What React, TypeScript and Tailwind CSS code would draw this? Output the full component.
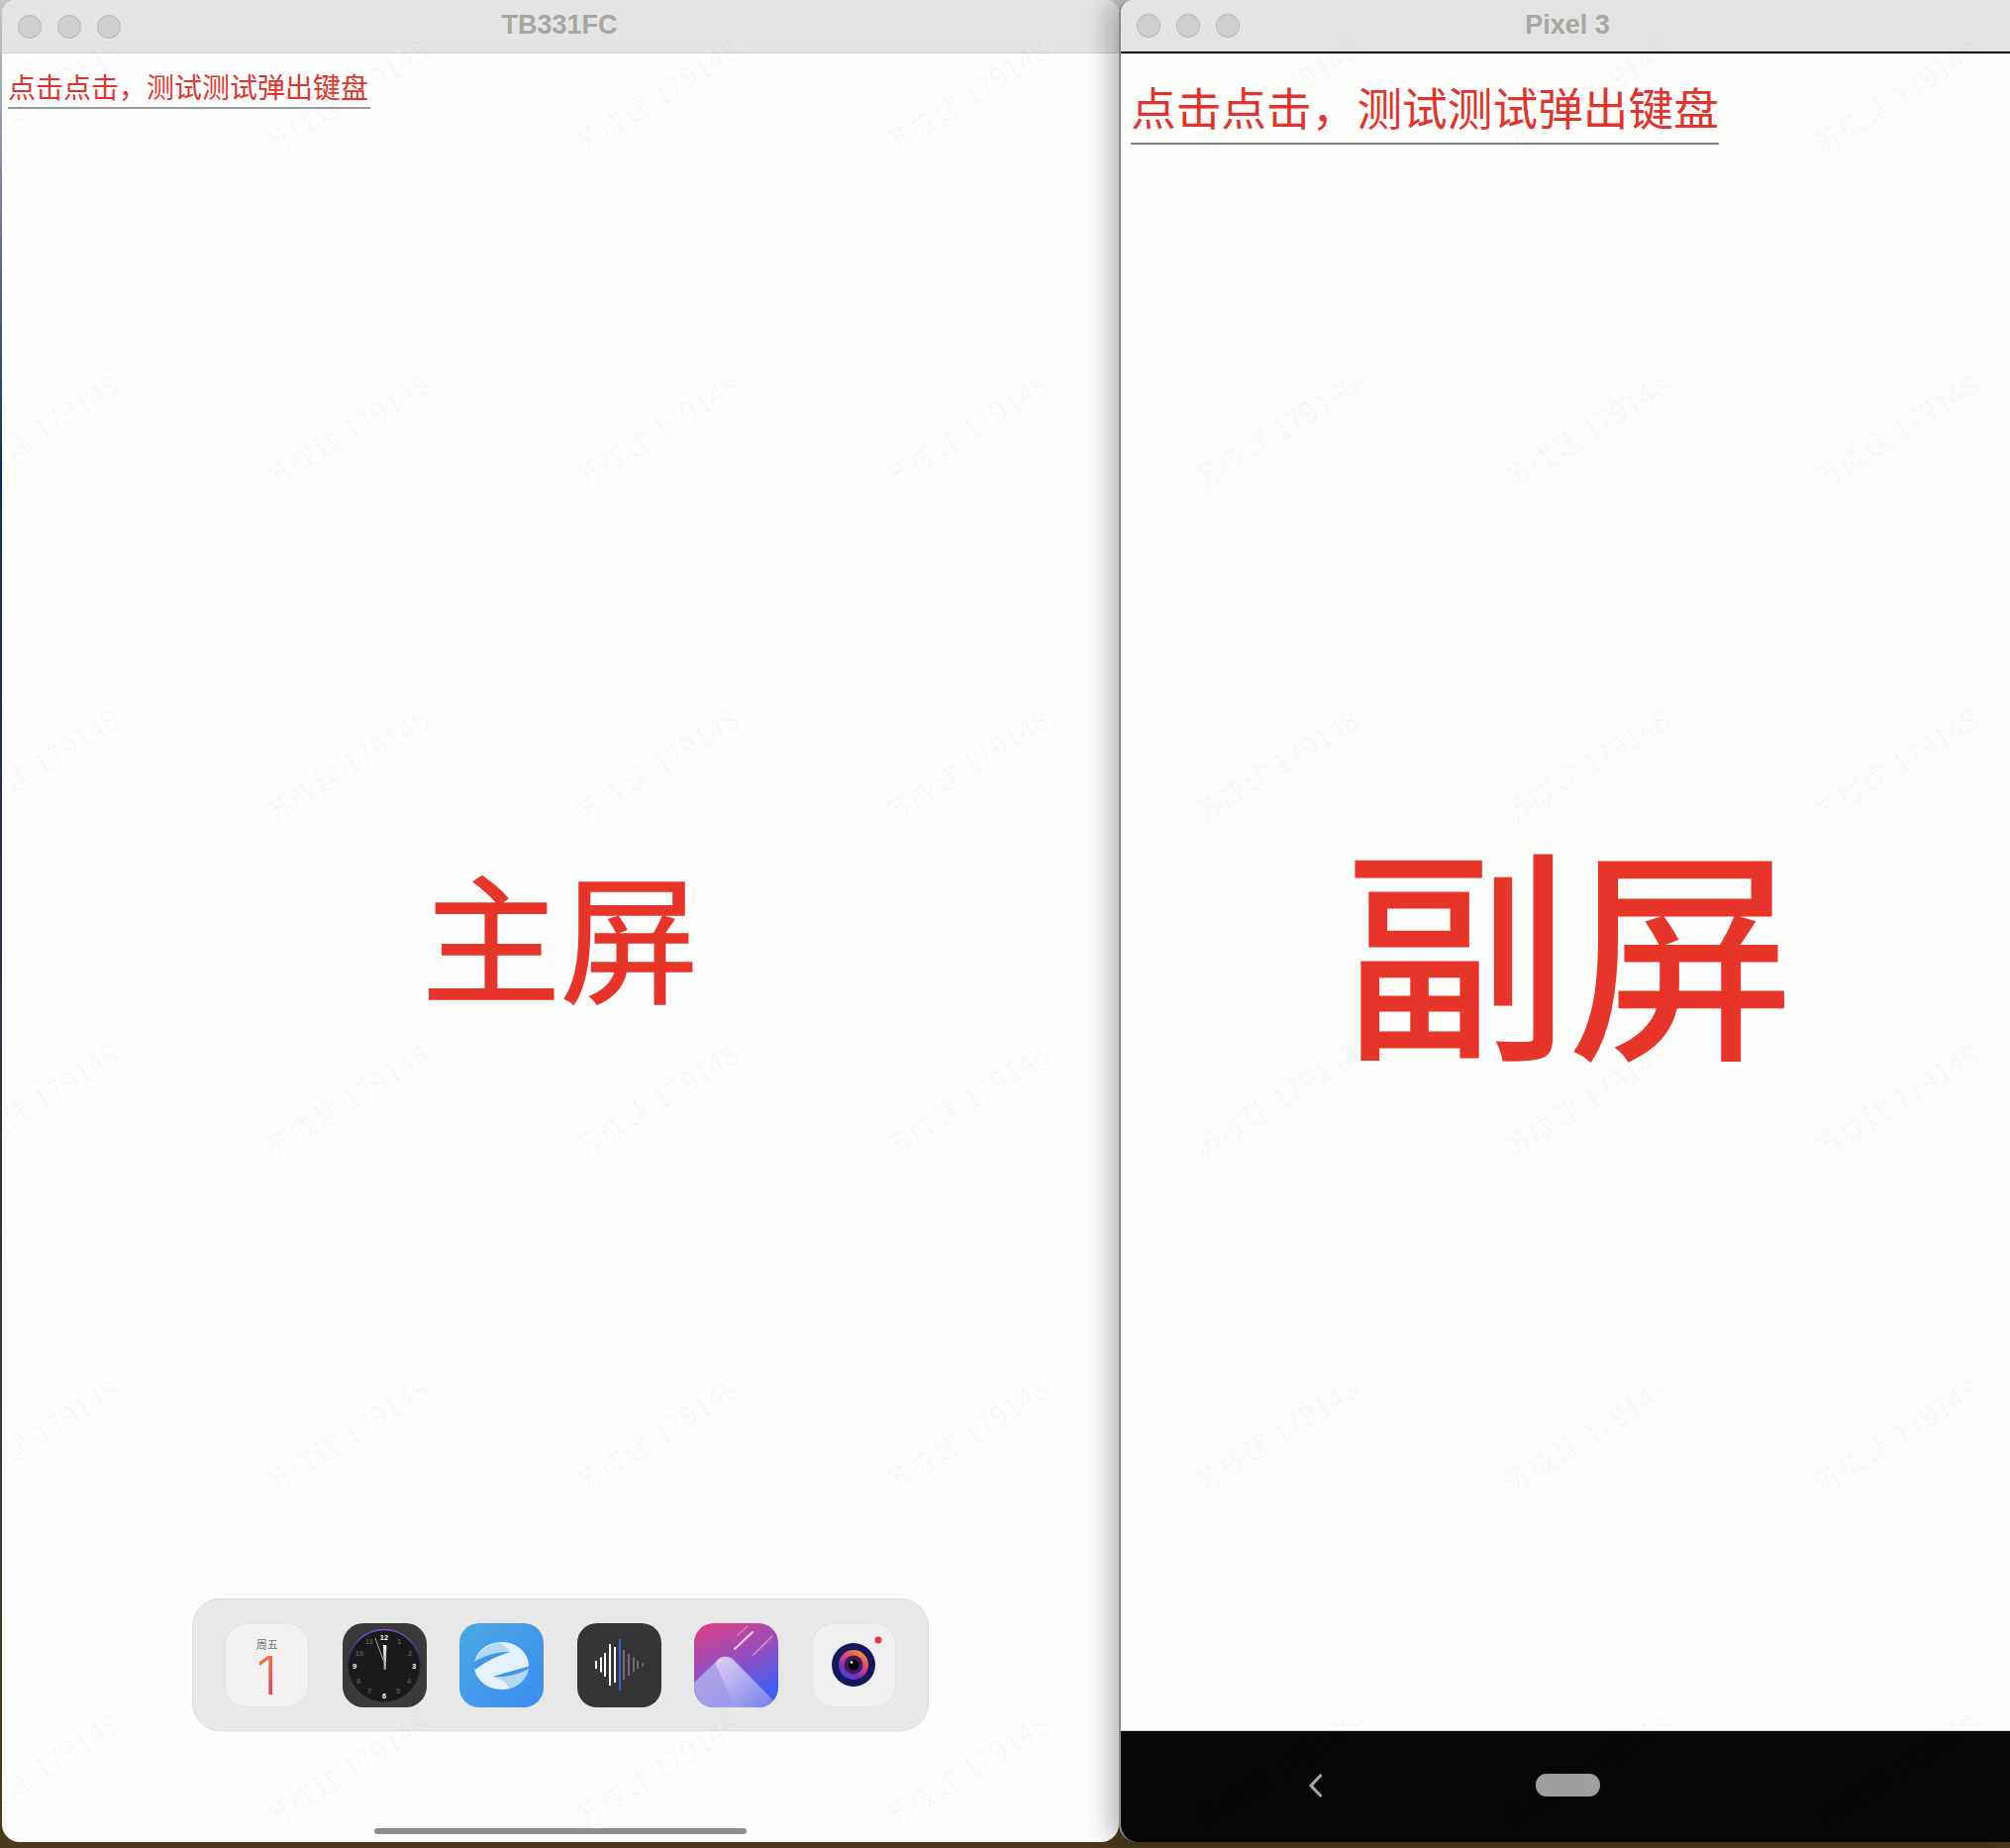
const cjk = "font-['Noto_Sans_CJK_SC','Noto_Sans',sans-serif]";

function Lights() {
  return (
    <div className="flex gap-4">
      <span className="w-6 h-6 rounded-full bg-[#d0d0ce] border border-[#b4b4b2]"></span>
      <span className="w-6 h-6 rounded-full bg-[#d0d0ce] border border-[#b4b4b2]"></span>
      <span className="w-6 h-6 rounded-full bg-[#d0d0ce] border border-[#b4b4b2]"></span>
    </div>
  );
}

function TitleBar({ title, dark }: { title: string; dark?: boolean }) {
  return (
    <div
      className={
        dark
          ? "relative h-[54px] shrink-0 flex items-center pl-4 bg-[#e3e3e1] border-b-2 border-black"
          : "relative h-[54px] shrink-0 flex items-center pl-4 bg-[#e4e4e2] border-b border-[#d2d2d0]"
      }
    >
      <Lights />
      <div
        className={
          dark
            ? "flex-1 text-center text-[#a6a6a4] font-bold text-[27px] leading-[30px] pb-[3px] font-['Liberation_Sans',sans-serif] pr-[116px]"
            : "flex-1 text-center text-[#a6a6a4] font-bold text-[27px] leading-[30px] pb-[3px] font-['Liberation_Sans',sans-serif] pr-[122px]"
        }
      >
        {title}
      </div>
    </div>
  );
}

function CalendarIcon() {
  return (
    <div className="w-[85px] h-[85px] rounded-[22px] bg-[#f1f1f1] border border-[#e2e2e2] flex flex-col items-center">
      <span className={`${cjk} text-[11px] leading-[12px] mt-[14px] text-[#777]`}>周五</span>
      <span className="font-['Inter',sans-serif] font-light text-[54px] leading-[48px] mt-[2px] text-transparent bg-clip-text bg-gradient-to-b from-[#f0762a] to-[#e6306e]">
        1
      </span>
    </div>
  );
}

function ClockIcon() {
  const nums = [
    ["12", 42, 17, "#fff"],
    ["1", 57, 21, "#555"],
    ["2", 68, 33, "#555"],
    ["3", 72, 46, "#fff"],
    ["4", 67, 61, "#555"],
    ["5", 56, 71, "#555"],
    ["6", 42, 76, "#fff"],
    ["7", 27, 71, "#555"],
    ["8", 16, 61, "#555"],
    ["9", 12, 46, "#fff"],
    ["10", 17, 33, "#555"],
    ["11", 27, 21, "#555"],
  ] as const;
  return (
    <svg width="85" height="85" viewBox="0 0 85 85">
      <defs>
        <linearGradient id="clockArc" x1="0" y1="0" x2="0" y2="1">
          <stop offset="0" stopColor="#7b4fd6" />
          <stop offset="1" stopColor="#22223a" />
        </linearGradient>
        <linearGradient id="clockHand" x1="0" y1="0" x2="0" y2="1">
          <stop offset="0" stopColor="#fff" />
          <stop offset="1" stopColor="#999" />
        </linearGradient>
      </defs>
      <rect width="85" height="85" rx="21" fill="#3a3a3a" />
      <circle cx="42" cy="43" r="36.5" fill="#1a1a1c" />
      <path d="M5.5 43a36.5 36.5 0 0 1 73 0" fill="none" stroke="url(#clockArc)" strokeWidth="1.4" />
      {nums.map((n) => (
        <text
          key={n[0]}
          x={n[1]}
          y={n[2]}
          fill={n[3]}
          fontSize="7.5"
          fontWeight="700"
          textAnchor="middle"
          fontFamily="Liberation Sans"
        >
          {n[0]}
        </text>
      ))}
      <path d="M41 22h3.400l-.6 25h-2.200z" fill="url(#clockHand)" />
      <path d="M33 15l8 22" stroke="#a8a8a8" strokeWidth="1" />
    </svg>
  );
}

function BrowserIcon() {
  return (
    <svg width="85" height="85" viewBox="0 0 85 85">
      <defs>
        <linearGradient id="browserBg" x1="0" y1="0" x2="1" y2="1">
          <stop offset="0" stopColor="#4aa8e2" />
          <stop offset="1" stopColor="#3a8cf0" />
        </linearGradient>
      </defs>
      <rect width="85" height="85" rx="20" fill="url(#browserBg)" />
      <ellipse cx="42.500" cy="43" rx="27.500" ry="24" fill="#e3f2fe" />
      <path d="M15 39C20 27 30 21 40 20c5 2 8 5 11 8-14 0-26 5-36 11z" fill="#b4d9f7" />
      <path d="M13 40c11-7 25-12 38-11-12 4-24 9-35 18z" fill="#4298e6" />
      <path d="M72 43c-14 4-26 7-38 11 12 2 26 0 38-7z" fill="#4298e6" />
      <path d="M70 46c-10 6-24 9-36 8 8 2 14 6 16 12 10-3 18-10 20-20z" fill="#b4d9f7" />
    </svg>
  );
}

function VoiceIcon() {
  const bars = [
    [19, 8, "#fff"],
    [24, 15, "#fff"],
    [28, 24, "#fff"],
    [33, 42, "#fff"],
    [38, 36, "#fff"],
    [43, 52, "#3f5fe0"],
    [47, 30, "#6e6e6e"],
    [52, 22, "#6e6e6e"],
    [57, 15, "#6e6e6e"],
    [61, 8, "#6e6e6e"],
    [66, 3, "#6e6e6e"],
  ] as const;
  return (
    <svg width="85" height="85" viewBox="0 0 85 85">
      <rect width="85" height="85" rx="20" fill="#353535" />
      {bars.map((b) => (
        <rect key={b[0]} x={b[0] - 1} y={42 - b[1] / 2} width="2" height={b[1]} fill={b[2]} />
      ))}
    </svg>
  );
}

function GalleryIcon() {
  return (
    <svg width="85" height="85" viewBox="0 0 85 85">
      <defs>
        <linearGradient id="galleryBg" x1="0" y1="0" x2="0.4" y2="1">
          <stop offset="0" stopColor="#e23f7a" />
          <stop offset="0.5" stopColor="#9a4dbe" />
          <stop offset="1" stopColor="#3f5ff0" />
        </linearGradient>
        <linearGradient id="galleryBase" x1="0" y1="0" x2="1" y2="1">
          <stop offset="0" stopColor="#bba3e6" />
          <stop offset="1" stopColor="#8f96f0" />
        </linearGradient>
        <linearGradient id="galleryPeak" x1="0" y1="0" x2="1" y2="1">
          <stop offset="0" stopColor="#eddcf3" />
          <stop offset="1" stopColor="#6f78ee" />
        </linearGradient>
        <clipPath id="galleryClip">
          <rect width="85" height="85" rx="20" />
        </clipPath>
      </defs>
      <g clipPath="url(#galleryClip)">
        <rect width="85" height="85" fill="url(#galleryBg)" />
        <path d="M0 60L24 37c4-4 10-4 14 0L82 80v5H0z" fill="url(#galleryBase)" />
        <path d="M22 42c0-8 12-11 18-5L80 78l-5 7H42z" fill="url(#galleryPeak)" opacity="0.8" />
        <path d="M41 26L59 9" stroke="#f6d8e6" strokeWidth="2" strokeLinecap="round" />
        <path d="M60 32L79 13" stroke="#e890b8" strokeWidth="1.5" strokeLinecap="round" />
        <path d="M43 13L54 3" stroke="#e880a8" strokeWidth="1.2" strokeLinecap="round" />
      </g>
    </svg>
  );
}

function CameraIcon() {
  return (
    <svg width="85" height="85" viewBox="0 0 85 85">
      <defs>
        <linearGradient id="lens" x1="0.8" y1="0" x2="0.2" y2="1">
          <stop offset="0" stopColor="#f0a020" />
          <stop offset="0.4" stopColor="#e0407a" />
          <stop offset="0.75" stopColor="#7a30c0" />
          <stop offset="1" stopColor="#2a50e0" />
        </linearGradient>
      </defs>
      <rect x="0.5" y="0.5" width="84" height="84" rx="21" fill="#efefef" stroke="#e2e2e2" />
      <circle cx="42" cy="42" r="22" fill="#14175a" />
      <circle cx="42" cy="42" r="15" fill="url(#lens)" />
      <circle cx="42" cy="42" r="9.500" fill="#3a1d5a" />
      <circle cx="42" cy="42" r="5.500" fill="#050505" />
      <circle cx="40" cy="39.500" r="1.400" fill="#d8d8d8" />
      <circle cx="67" cy="17" r="3.600" fill="#e23a48" />
    </svg>
  );
}

function Dock() {
  return (
    <div className="w-[744px] h-[134px] mx-auto rounded-[28px] bg-[#e8e8e8] border border-[#dcdcdc] flex items-center justify-center gap-[33.5px]">
      <CalendarIcon />
      <ClockIcon />
      <BrowserIcon />
      <VoiceIcon />
      <GalleryIcon />
      <CameraIcon />
    </div>
  );
}

function Watermarks() {
  const cells = Array.from({ length: 48 });
  return (
    <div className="absolute left-[-120px] top-[-72px] grid grid-cols-[repeat(8,313px)] auto-rows-[338px] pointer-events-none z-20">
      {cells.map((_, i) => (
        <div key={i} className="flex items-center justify-center">
          <span className={`${cjk} text-[29px] whitespace-nowrap -rotate-[32deg] text-black/[0.028]`}>
            苏成建 179148
          </span>
        </div>
      ))}
    </div>
  );
}

export default function App() {
  return (
    <div className="relative w-[2030px] h-[1866px] overflow-hidden bg-gradient-to-b from-[#c8c8c8] via-[#1a2a55] via-25% to-[#4a3a1c]">
      <div className="flex items-start h-[1860px] pl-[2px]">
        {/* 主屏 */}
        <div className="w-[1128px] h-full flex flex-col bg-[#fefefe] rounded-t-[14px] rounded-b-[18px] overflow-hidden">
          <TitleBar title="TB331FC" />
          <div className="pl-[6px] pt-[15px]">
            <span className={`${cjk} inline-block text-[28px] leading-[36px] pb-[3px] pr-[2px] text-[#e2332d] border-b-2 border-[#999]`}>
              点击点击，测试测试弹出键盘
            </span>
          </div>
          <div className={`${cjk} flex-1 flex items-center justify-center pt-[158px] [-webkit-text-stroke:1.5px_#e8352a] text-[#e8352a] text-[140px] leading-none`}>
            主屏
          </div>
          <Dock />
          <div className="w-[376px] h-[6px] mx-auto mt-[98px] mb-2 bg-[#8e8e8e] rounded-full"></div>
        </div>
        {/* 副屏 */}
        <div className="relative z-10 flex-1 h-full flex flex-col bg-[#fdfefc] border-l-2 border-[#8a8a8a] rounded-tl-[14px] rounded-bl-[18px] overflow-hidden shadow-[-10px_0_26px_rgba(0,0,0,0.28)]">
          <TitleBar title="Pixel 3" dark />
          <div className="pl-[10px] pt-[22px]">
            <span className={`${cjk} inline-block text-[45.7px] leading-[62px] pb-[6px] text-[#e2332d] border-b-2 border-[#808080]`}>
              点击点击，测试测试弹出键盘
            </span>
          </div>
          <div className={`${cjk} flex-1 flex items-center justify-center pt-[12px] pl-[7px] [-webkit-text-stroke:3px_#e8352a] text-[#e8352a] text-[228px] leading-none`}>
            副屏
          </div>
          <div className="h-[113px] shrink-0 bg-[#060606] border-t border-[#cfcfcf] flex items-center pl-[189px] pb-[3px]">
            <svg width="16" height="26" viewBox="0 0 16 26" className="mr-[214px]">
              <path d="M13.500 2L3 13l10.500 11" fill="none" stroke="#a8a8a8" strokeWidth="3" />
            </svg>
            <span className="w-[65px] h-[23px] rounded-[11px] bg-[#a0a0a0]"></span>
          </div>
        </div>
      </div>
      <Watermarks />
    </div>
  );
}
